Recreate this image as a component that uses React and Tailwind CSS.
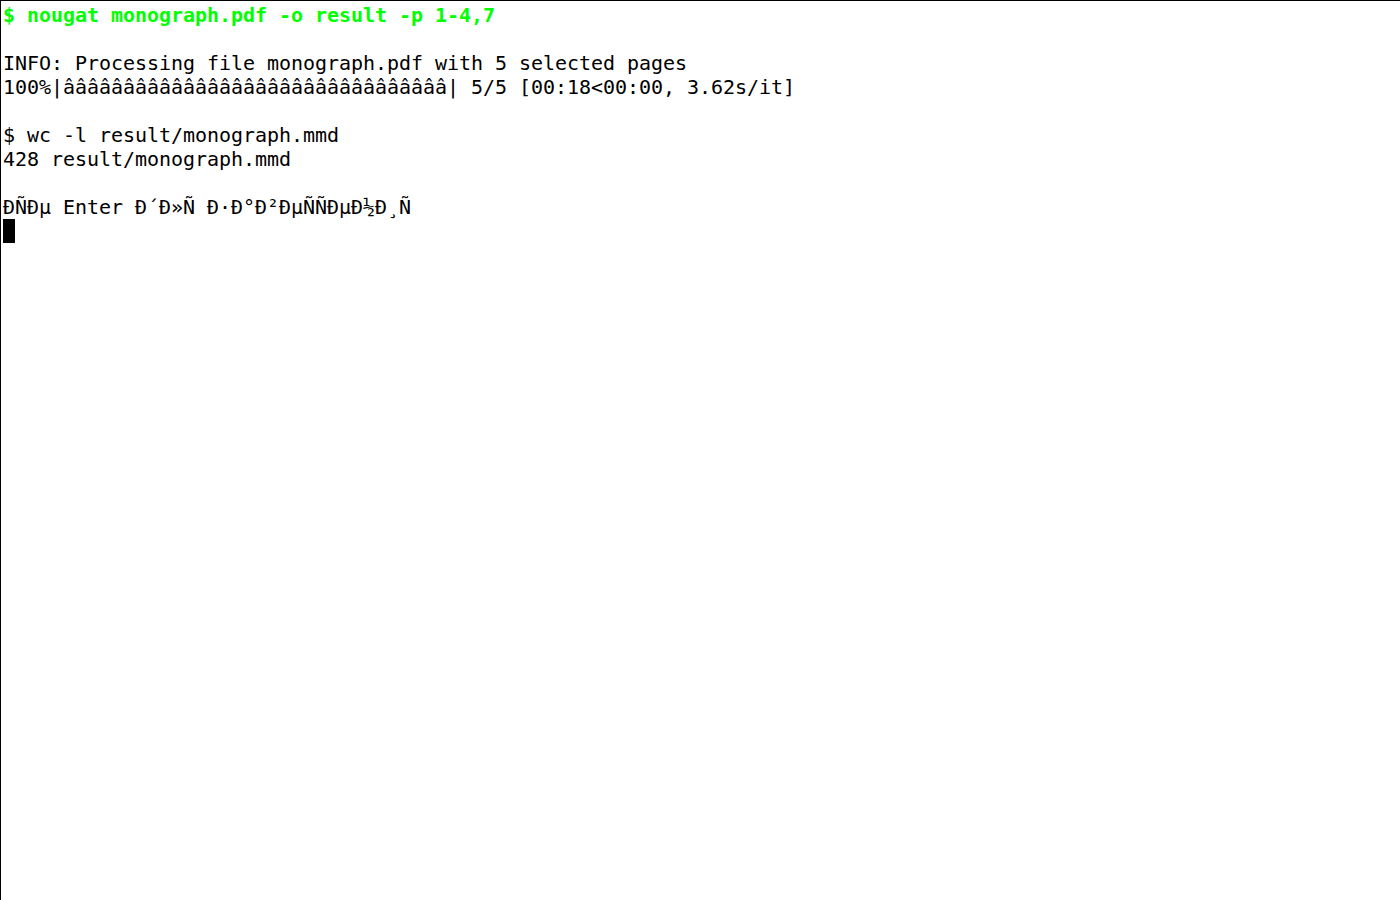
import React from "react";

export default function App() {
  const bar = "â".repeat(32);
  return (
    <div className="w-[1400px] h-[900px] overflow-hidden bg-white border-t border-l border-black pt-[2px] pl-[2px]">
      <pre className="m-0 text-[20px] leading-[24px] tracking-[-0.04px] text-black whitespace-pre" style={{ fontFamily: '"DejaVu Sans Mono", monospace' }}>
        <div className="font-bold text-[#00ff00]">$ nougat monograph.pdf -o result -p 1-4,7</div>
        <div>&nbsp;</div>
        <div>INFO: Processing file monograph.pdf with 5 selected pages</div>
        <div>{"100%|" + bar + "| 5/5 [00:18<00:00, 3.62s/it]"}</div>
        <div>&nbsp;</div>
        <div>$ wc -l result/monograph.mmd</div>
        <div>428 result/monograph.mmd</div>
        <div>&nbsp;</div>
        <div>ÐÑÐµ Enter Ð´Ð»Ñ Ð·Ð°Ð²ÐµÑÑÐµÐ½Ð¸Ñ</div>
        <div className="h-[24px] flex items-stretch">
          <span className="inline-block w-[12px] h-[24px] bg-black"></span>
        </div>
      </pre>
    </div>
  );
}
